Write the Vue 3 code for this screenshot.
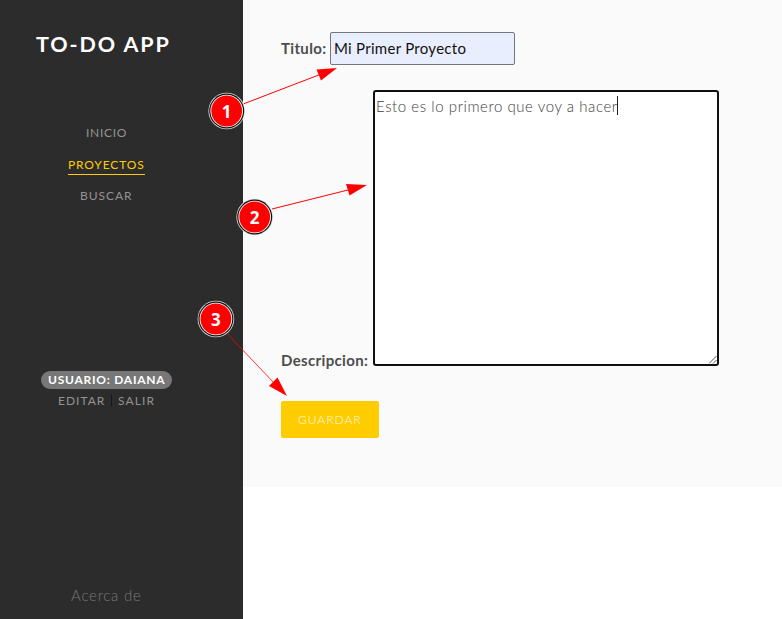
<script setup>
import { ref } from 'vue'

const title = ref('Mi Primer Proyecto')
const description = 'Esto es lo primero que voy a hacer'
const links = [
  { id: 'inicio', label: 'INICIO' },
  { id: 'proyectos', label: 'PROYECTOS', active: true },
  { id: 'buscar', label: 'BUSCAR' },
]
const steps = [
  { n: 1, x: 226.7, y: 111, line: [244, 103.7, 320, 74.5], head: '337,68 316.5,69.5 321,80.5' },
  { n: 2, x: 254.7, y: 217, line: [272, 209, 350, 189.5], head: '367,185 346,184 349.5,195.5' },
  { n: 3, x: 215.9, y: 319, line: [227.5, 334, 275, 384], head: '287,396 277.5,377.5 269,386' },
]
</script>

<template>
  <div class="page">
    <aside class="sidebar">
      <h1 class="brand">TO-DO APP</h1>
      <nav class="menu">
        <a v-for="l in links" :key="l.id" :class="['link', l.id, { active: l.active }]">{{ l.label }}</a>
      </nav>
      <div class="user">
        <span class="badge"><span class="badge-text">USUARIO: DAIANA</span></span>
        <div class="actions"><span class="edit">EDITAR</span><i class="sep"></i><span class="exit">SALIR</span></div>
      </div>
      <footer class="about"><span>Acerca de</span></footer>
    </aside>
    <main class="content">
      <div class="row title-row">
        <label class="l-title">Titulo:</label>
        <div class="field"><span class="field-text">{{ title }}</span></div>
      </div>
      <div class="row desc-row">
        <label class="l-desc">Descripcion:</label>
        <div class="area">
          <span class="area-text">{{ description }}</span><i class="caret"></i>
          <svg class="grip" width="8" height="8" viewBox="0 0 8 8">
            <path d="M0 7.5L7.5 0M4 7.5L7.5 4" stroke="#555" stroke-width="1" fill="none" />
          </svg>
        </div>
      </div>
      <button class="save"><span>GUARDAR</span></button>
    </main>
    <svg class="overlay" width="782" height="619" viewBox="0 0 782 619">
      <g v-for="s in steps" :key="s.n">
        <line :x1="s.line[0]" :y1="s.line[1]" :x2="s.line[2]" :y2="s.line[3]" stroke="#f00" :stroke-width="s.n === 3 ? 0.8 : 1" />
        <polygon :points="s.head" fill="#f00" />
        <circle :cx="s.x" :cy="s.y" r="18.3" fill="#ddd" />
        <circle :cx="s.x" :cy="s.y" r="17.5" fill="#111" />
        <circle :cx="s.x" :cy="s.y" r="16.3" fill="#fff" />
        <circle :cx="s.x" :cy="s.y" r="15.4" fill="#f00" />
        <text :x="s.x" :y="s.y + 7" text-anchor="middle" class="num">{{ s.n }}</text>
      </g>
    </svg>
  </div>
</template>

<style>
body { margin: 0; background: #fff; overflow: hidden; }
</style>

<style scoped>
.page {
  position: relative;
  display: flex;
  align-items: flex-start;
  width: 782px;
  height: 619px;
  overflow: hidden;
  font-family: Lato, "Open Sans", sans-serif;
  font-weight: 400;
  white-space: nowrap;
}
.sidebar {
  box-sizing: border-box;
  display: flex;
  flex-direction: column;
  align-items: flex-start;
  width: 243px;
  height: 619px;
  background: #2c2c2c;
}
.brand {
  margin: 30px 0 0 36px;
  font-size: 21.5px;
  line-height: 29px;
  font-weight: 700;
  letter-spacing: 1.9px;
  color: #fff;
}
.menu {
  display: flex;
  flex-direction: column;
  align-items: flex-start;
  margin-top: 65px;
  font-size: 12px;
  color: #939393;
}
.link { height: 18px; line-height: 18px; letter-spacing: 0.85px; margin-bottom: 14px; }
.inicio { margin-left: 86px; letter-spacing: 0.7px; }
.proyectos { margin-left: 68px; margin-bottom: 12px; }
.active { color: #ffcc00; border-bottom: 1px solid #ffcc00; }
.buscar { margin-left: 80px; letter-spacing: 0.95px; }
.user { margin: 152px 0 0 41px; }
.badge {
  display: flex;
  align-items: center;
  box-sizing: border-box;
  width: 131px;
  height: 18px;
  padding-left: 7px;
  border-radius: 9px;
  background: #777;
  color: #fff;
  font-size: 12px;
  font-weight: 700;
}
.badge-text { letter-spacing: 0.75px; line-height: 16px; margin-top: -1px; }
.actions {
  display: flex;
  align-items: center;
  height: 18px;
  margin: 2px 0 0 17px;
  font-size: 12px;
  color: #939393;
}
.edit { width: 53px; letter-spacing: 1px; }
.sep { width: 1px; height: 11px; background: #171717; margin-right: 6px; }
.exit { letter-spacing: 1.1px; }
.about { margin: 175px 0 0 71px; font-size: 15px; line-height: 22px; letter-spacing: 0.75px; color: #777; font-weight: 300; }
.content {
  box-sizing: border-box;
  width: 539px;
  height: 487px;
  padding: 32px 0 0 38px;
  background: #fafafa;
}
.row { display: flex; color: #4d4d4d; font-size: 15px; }
.row label { font-weight: 700; line-height: 20px; letter-spacing: 0.35px; }
.title-row { height: 33px; align-items: center; }
.l-title { width: 49px; margin-top: -2px; }
.field {
  box-sizing: border-box;
  width: 185px;
  height: 33px;
  padding-left: 3px;
  border: 1px solid #767676;
  border-radius: 2px;
  background: #e8eefe;
  line-height: 31px;
  letter-spacing: 0.28px;
  color: #111;
}
.desc-row { margin-top: 25px; height: 276px; align-items: flex-end; }
.l-desc { width: 92px; margin-bottom: -4px; }
.area {
  position: relative;
  box-sizing: border-box;
  display: flex;
  width: 346px;
  height: 276px;
  padding: 4px 0 0 1px;
  border: 2px solid #101010;
  border-radius: 3px;
  background: #fff;
  line-height: 20px;
  color: #404040;
  font-weight: 300;
}
.area-text { width: 241px; letter-spacing: 0.57px; }
.caret { width: 1px; height: 19px; background: #222; }
.grip { position: absolute; right: 0; bottom: 0; }
.save {
  display: block;
  box-sizing: border-box;
  width: 98px;
  height: 37px;
  margin-top: 35px;
  padding: 0 0 1px 17px;
  border: 0;
  border-radius: 2px;
  background: #ffcc00;
  color: #fffbe6;
  font: 300 12px Lato, sans-serif;
  text-align: left;
  letter-spacing: 1px;
}
.overlay { position: absolute; left: 0; top: 0; pointer-events: none; }
.num { font: 700 17px "Open Sans", sans-serif; fill: #fff; }
</style>
